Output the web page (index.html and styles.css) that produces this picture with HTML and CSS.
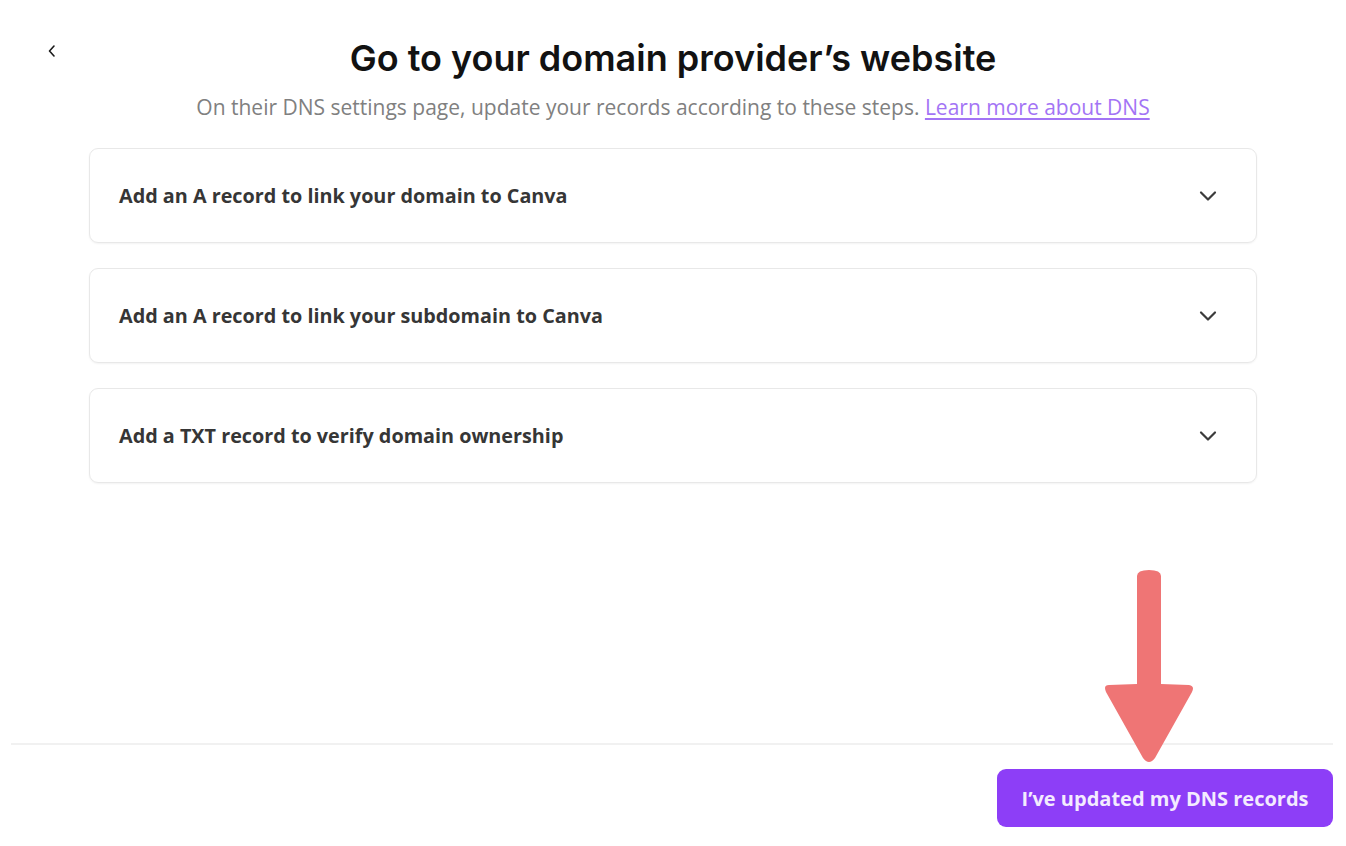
FILE: index.html
```html
<!DOCTYPE html>
<html lang="en">
<head>
    <meta charset="UTF-8">
    <meta name="viewport" content="width=device-width, initial-scale=1.0">
    <title>Connect domain</title>
    <link rel="stylesheet" href="styles.css">
</head>
<body>
    <div class="page">
        <main class="content">
            <button class="back" type="button" aria-label="Back">
                <svg width="16" height="16" viewBox="0 0 16 16" fill="none" stroke="#1a1a1a" stroke-width="1.6" stroke-linecap="round" stroke-linejoin="round">
                    <path d="M10 3 5.5 8 10 13"/>
                </svg>
            </button>

            <h1>Go to your domain provider’s website</h1>
            <p class="subtitle">On their DNS settings page, update your records according to these steps. <a href="#">Learn more about DNS</a></p>

            <div class="steps">
                <div class="step">
                    <span>Add an A record to link your domain to Canva</span>
                    <svg class="chev" width="20" height="20" viewBox="0 0 20 20" fill="none" stroke="#3b3b3b" stroke-width="2.2" stroke-linecap="round" stroke-linejoin="round">
                        <path d="M3 6.5 10 13.5 17 6.5"/>
                    </svg>
                </div>
                <div class="step">
                    <span>Add an A record to link your subdomain to Canva</span>
                    <svg class="chev" width="20" height="20" viewBox="0 0 20 20" fill="none" stroke="#3b3b3b" stroke-width="2.2" stroke-linecap="round" stroke-linejoin="round">
                        <path d="M3 6.5 10 13.5 17 6.5"/>
                    </svg>
                </div>
                <div class="step">
                    <span>Add a TXT record to verify domain ownership</span>
                    <svg class="chev" width="20" height="20" viewBox="0 0 20 20" fill="none" stroke="#3b3b3b" stroke-width="2.2" stroke-linecap="round" stroke-linejoin="round">
                        <path d="M3 6.5 10 13.5 17 6.5"/>
                    </svg>
                </div>
            </div>
        </main>

        <footer class="footer">
            <button class="primary" type="button">I’ve updated my DNS records</button>
        </footer>

        <!-- annotation arrow -->
        <svg class="arrow" width="92" height="200" viewBox="0 0 92 200">
            <path d="M34 8 Q34 2 46 2 Q58 2 58 8 L58 116 L86 117 Q92 118 89 124 L52 190 Q46 198 40 190 L3 124 Q0 117 6 117 L34 116 Z" fill="#ef7575"/>
        </svg>
    </div>
</body>
</html>
```

FILE: styles.css
```css
* {
    box-sizing: border-box;
}

body {
    margin: 0;
    background-color: #fff;
    font-family: "Open Sans", Arial, sans-serif;
    color: #1a1a1a;
}

.page {
    position: relative;
    height: 100vh;
    display: flex;
    flex-direction: column;
}

.content {
    flex: 1;
    padding: 34px 89px 0 89px;
}

.back {
    position: absolute;
    left: 43px;
    top: 43px;
    width: 18px;
    height: 18px;
    padding: 0;
    border: none;
    background: none;
    cursor: pointer;
}

h1 {
    margin: 0;
    text-align: center;
    font-family: Inter, "Noto Sans", sans-serif;
    font-size: 36px;
    font-weight: 600;
    letter-spacing: 0;
    line-height: 48px;
    color: #121212;
}

.subtitle {
    margin: 11px 0 0 0;
    text-align: center;
    font-size: 21px;
    line-height: 28px;
    color: #808080;
}

.subtitle a {
    color: #a374f5;
    text-decoration: underline;
    text-underline-offset: 3px;
}

.steps {
    margin-top: 27px;
    display: flex;
    flex-direction: column;
    gap: 25px;
}

.step {
    height: 95px;
    display: flex;
    align-items: center;
    justify-content: space-between;
    padding: 0 38px 0 29px;
    border: 1px solid #e8e8e8;
    border-radius: 9px;
    box-shadow: 0 1px 2px rgba(0, 0, 0, 0.05);
    font-size: 19.8px;
    font-weight: 700;
    color: #363636;
}

.footer {
    margin: 0 13px 0 11px;
    padding: 24px 0 19px 0;
    border-top: 2px solid #f1f1f1;
    display: flex;
    justify-content: flex-end;
}

.primary {
    width: 336px;
    height: 58px;
    border: none;
    border-radius: 9px;
    background-color: #8d3ef7;
    color: #f3ebff;
    font-family: "Open Sans", Arial, sans-serif;
    font-size: 20px;
    font-weight: 700;
    cursor: pointer;
}

.arrow {
    position: absolute;
    left: 1103px;
    top: 568px;
}
```
